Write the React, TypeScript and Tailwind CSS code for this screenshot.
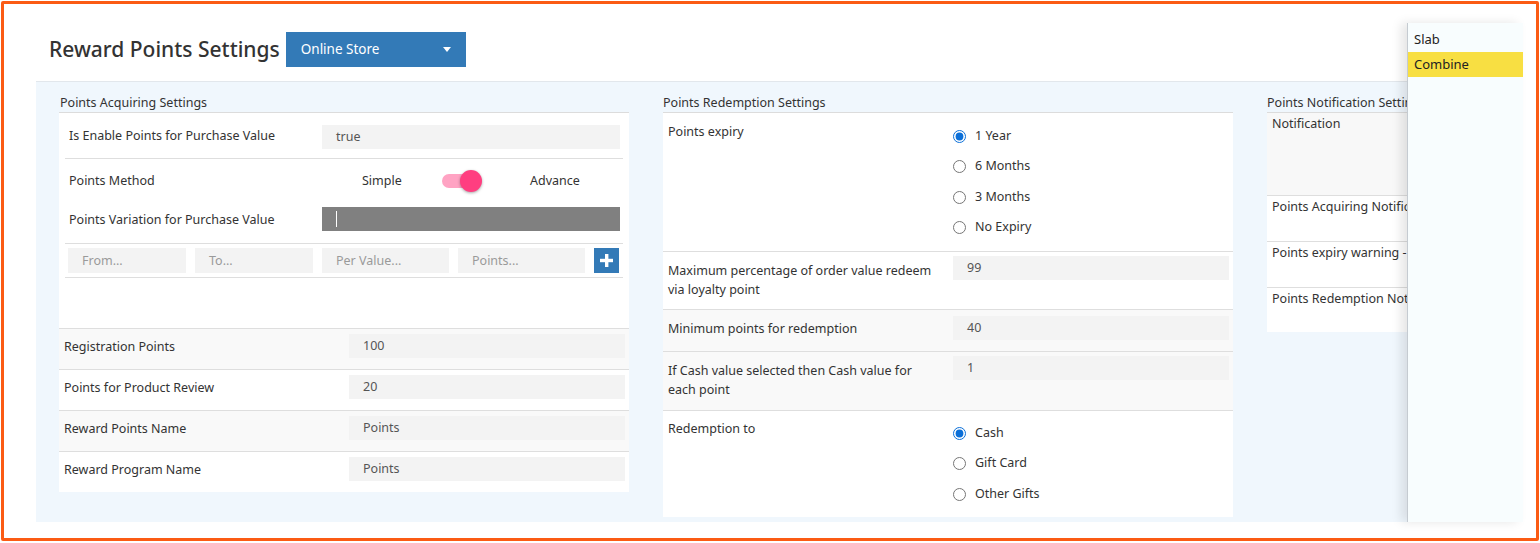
import React from 'react';

const font = "font-['Segoe_UI','Noto_Sans',sans-serif]";

function Box({ value, className = '' }: { value: string; className?: string }) {
  return <div className={`h-[24px] bg-[#f3f3f3] pl-[14px] leading-[24px] text-[#555] ${className}`}>{value}</div>;
}

function Radio({ label, checked = false, name }: { label: string; checked?: boolean; name: string }) {
  return (
    <label className="flex h-[30.5px] items-center gap-[9px] text-[#333]">
      <input type="radio" name={name} defaultChecked={checked} className="m-0 h-[13px] w-[13px] accent-[#0b6fd8]" />
      {label}
    </label>
  );
}

function AcquiringCard() {
  const rows = [
    { label: 'Registration Points', value: '100' },
    { label: 'Points for Product Review', value: '20' },
    { label: 'Reward Points Name', value: 'Points' },
    { label: 'Reward Program Name', value: 'Points' },
  ];
  return (
    <div className="w-[570px] shrink-0">
      <div className="h-[18px] pl-[1px] leading-[18px] text-[#333]">Points Acquiring Settings</div>
      <div className="border-t border-[#dcdcdc] bg-white text-[#333]">
        <div className="px-[6px]">
          <div className="flex h-[46px] items-center border-b border-[#dedede] pl-[4px] pr-[3px] pt-[2px]">
            <div className="w-[253px]">Is Enable Points for Purchase Value</div>
            <Box value="true" className="flex-1" />
          </div>
          <div className="flex h-[44px] items-center pl-[4px] pr-[3px]">
            <div className="w-[253px]">Points Method</div>
            <div className="w-[120px] pl-[40px]">Simple</div>
            <div className="w-[88px]">
              <div className="relative h-[22px] w-[40px]">
                <div className="absolute left-0 top-[4px] h-[14px] w-[36px] rounded-full bg-[#ffa3c3]" />
                <div className="absolute left-[18px] top-0 h-[22px] w-[22px] rounded-full bg-[#ff3e80] shadow-[0_1px_3px_rgba(0,0,0,0.35)]" />
              </div>
            </div>
            <div>Advance</div>
          </div>
          <div className="flex h-[41px] items-start border-b border-[#dedede] pl-[4px] pr-[3px] pt-[4px]">
            <div className="w-[253px] leading-[26px]">Points Variation for Purchase Value</div>
            <div className="flex h-[24px] flex-1 items-center bg-[#808080] pl-[14px]">
              <div className="h-[16px] w-[1px] bg-white" />
            </div>
          </div>
          <div className="flex h-[34px] items-start gap-[9px] border-b border-[#dedede] pl-[3px] pt-[4px] text-[#9a9a9a]">
            <div className="h-[25px] w-[118px] bg-[#f3f3f3] pl-[14px] leading-[25px]">From...</div>
            <div className="h-[25px] w-[118px] bg-[#f3f3f3] pl-[14px] leading-[25px]">To...</div>
            <div className="h-[25px] w-[127px] bg-[#f3f3f3] pl-[14px] leading-[25px]">Per Value...</div>
            <div className="h-[25px] w-[127px] bg-[#f3f3f3] pl-[14px] leading-[25px]">Points...</div>
            <button type="button" className="flex h-[25px] w-[25px] items-center justify-center bg-[#337ab7]">
              <svg width="13" height="13" viewBox="0 0 13 13">
                <rect x="5" y="0" width="3.4" height="13" fill="white" />
                <rect x="0" y="4.8" width="13" height="3.4" fill="white" />
              </svg>
            </button>
          </div>
          <div className="h-[50px]" />
        </div>
        {rows.map((r, i) => (
          <div
            key={r.label}
            className={`flex h-[41px] items-start border-t border-[#dedede] pl-[5px] pr-[4px] pt-[5px] ${i % 2 === 0 ? 'bg-[#f9f9f9]' : 'bg-white'}`}
          >
            <div className="w-[285px] leading-[26px]">{r.label}</div>
            <Box value={r.value} className="flex-1" />
          </div>
        ))}
      </div>
    </div>
  );
}

function RedemptionCard() {
  return (
    <div className="w-[570px] shrink-0">
      <div className="h-[18px] leading-[18px] text-[#333]">Points Redemption Settings</div>
      <div className="border-t border-[#dcdcdc] bg-white text-[#333]">
        <div className="flex h-[138px] pl-[5px] pr-[4px]">
          <div className="w-[285px] pt-[10px] leading-[18px]">Points expiry</div>
          <div className="pt-[8px]">
            <Radio name="expiry" label="1 Year" checked />
            <Radio name="expiry" label="6 Months" />
            <Radio name="expiry" label="3 Months" />
            <Radio name="expiry" label="No Expiry" />
          </div>
        </div>
        <div className="flex h-[58px] items-start border-t border-[#dedede] pl-[5px] pr-[4px] pt-[4px]">
          <div className="w-[285px] pr-[14px] pt-[5px] leading-[19px]">Maximum percentage of order value redeem via loyalty point</div>
          <Box value="99" className="flex-1" />
        </div>
        <div className="flex h-[42px] items-start border-t border-[#dedede] bg-[#f9f9f9] pl-[5px] pr-[4px] pt-[6px]">
          <div className="w-[285px] leading-[26px]">Minimum points for redemption</div>
          <Box value="40" className="flex-1" />
        </div>
        <div className="flex h-[59px] items-start border-t border-[#dedede] bg-[#f9f9f9] pl-[5px] pr-[4px] pt-[4px]">
          <div className="w-[285px] pr-[30px] pt-[5px] leading-[19px]">If Cash value selected then Cash value for each point</div>
          <Box value="1" className="flex-1" />
        </div>
        <div className="flex h-[107px] border-t border-[#dedede] pl-[5px] pr-[4px]">
          <div className="w-[285px] pt-[9px] leading-[18px]">Redemption to</div>
          <div className="pt-[7px]">
            <Radio name="to" label="Cash" checked />
            <Radio name="to" label="Gift Card" />
            <Radio name="to" label="Other Gifts" />
          </div>
        </div>
      </div>
    </div>
  );
}

function NotificationCard() {
  const rows = [
    { label: 'Points Acquiring Notification', h: 'h-[46px]' },
    { label: 'Points expiry warning - Days before expiry', h: 'h-[46px]' },
    { label: 'Points Redemption Notification', h: 'h-[45px]' },
  ];
  return (
    <div className="w-[570px] shrink-0">
      <div className="h-[18px] whitespace-nowrap leading-[18px] text-[#333]">Points Notification Settings</div>
      <div className="border-t border-[#dcdcdc] bg-white text-[#333]">
        <div className="h-[82px] bg-[#f8f8f8] pl-[5px] pt-[2px] leading-[18px]">Notification</div>
        {rows.map((r) => (
          <div key={r.label} className={`${r.h} whitespace-nowrap border-t border-[#dedede] pl-[5px] pt-[2px] leading-[18px]`}>
            {r.label}
          </div>
        ))}
      </div>
    </div>
  );
}

export default function App() {
  return (
    <div className={`h-[543px] w-[1540px] overflow-hidden bg-white pl-[1px] pt-[1px] text-[12.5px] ${font}`}>
      <div className="relative h-[540px] w-[1538px] overflow-hidden rounded-[2px] border-[3px] border-[#fb5b14] bg-white">
        <div className="flex h-[77px] items-start gap-[6px] pl-[45px] pt-[28px]">
          <h1 className="mt-[1px] text-[21px] font-medium leading-[32px] text-[#333]">Reward Points Settings</h1>
          <button
            type="button"
            className="flex h-[35px] w-[180px] items-center justify-between bg-[#337ab7] pl-[15px] pr-[15px] text-[13.5px] text-white"
          >
            <span>Online Store</span>
            <span className="h-0 w-0 border-x-[4px] border-t-[5px] border-x-transparent border-t-white" />
          </button>
        </div>
        <div className="ml-[32px] flex h-[441px] w-[1487px] gap-[34px] overflow-hidden border-t border-[#e2e7ec] bg-[#f0f7fd] pl-[23px] pt-[12px]">
          <AcquiringCard />
          <RedemptionCard />
          <NotificationCard />
        </div>
        <div className="absolute left-[1403px] top-[19px] h-[499px] w-[116px] border-l border-[#c5cbd1] bg-[#f8fdfe] pt-[4px] text-[13px] text-[#222] shadow-[-6px_0_10px_rgba(0,0,0,0.10)]">
          <div className="h-[25px] pl-[6px] leading-[25px]">Slab</div>
          <div className="h-[25px] bg-[#f8df42] pl-[6px] leading-[25px]">Combine</div>
        </div>
      </div>
    </div>
  );
}
